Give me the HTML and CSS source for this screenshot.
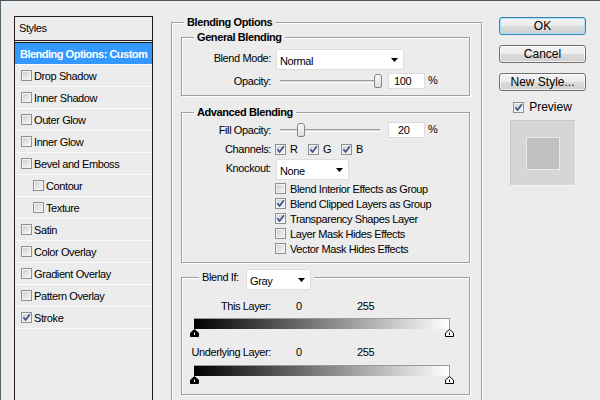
FILE: index.html
```html
<!DOCTYPE html>
<html>
<head>
<meta charset="utf-8">
<title>Layer Style</title>
<link rel="stylesheet" href="styles.css">
</head>
<body>
<div class="dialog">
  <aside class="styles">
    <div class="styles-head">Styles</div>
    <ul class="style-list">
      <li class="row selected">Blending Options: Custom</li>
      <li class="row"><span class="cb"></span>Drop Shadow</li>
      <li class="row"><span class="cb"></span>Inner Shadow</li>
      <li class="row"><span class="cb"></span>Outer Glow</li>
      <li class="row"><span class="cb"></span>Inner Glow</li>
      <li class="row"><span class="cb"></span>Bevel and Emboss</li>
      <li class="row sub"><span class="cb"></span>Contour</li>
      <li class="row sub"><span class="cb"></span>Texture</li>
      <li class="row"><span class="cb"></span>Satin</li>
      <li class="row"><span class="cb"></span>Color Overlay</li>
      <li class="row"><span class="cb"></span>Gradient Overlay</li>
      <li class="row"><span class="cb"></span>Pattern Overlay</li>
      <li class="row"><span class="cb"><svg viewBox="0 0 9 9"><path d="M1.3 4.3 L3.6 7 L7.9 1.2" fill="none" stroke="#3d4f90" stroke-width="1.7"/></svg></span>Stroke</li>
    </ul>
  </aside>

  <main class="main">
    <fieldset class="grp outer">
      <legend>Blending Options</legend>

      <fieldset class="grp inner general">
        <legend>General Blending</legend>
        <div class="frow h21">
          <span class="lbl up">Blend Mode:</span>
          <div class="select w-mode"><span>Normal</span><svg class="arr" width="7" height="4" viewBox="0 0 7 4"><path d="M0 0H7L3.5 4Z"/></svg></div>
        </div>
        <div class="frow h18 gap2">
          <span class="lbl">Opacity:</span>
          <div class="slider"><div class="track"></div><div class="thumb" style="left:94px"></div></div>
          <div class="num">100</div>
          <span class="pct">%</span>
        </div>
      </fieldset>

      <fieldset class="grp inner advanced">
        <legend>Advanced Blending</legend>
        <div class="frow h18">
          <span class="lbl">Fill Opacity:</span>
          <div class="slider"><div class="track"></div><div class="thumb" style="left:17px"></div></div>
          <div class="num num20">20</div>
          <span class="pct">%</span>
        </div>
        <div class="frow h14 gap3">
          <span class="lbl">Channels:</span>
          <div class="chans">
            <span class="chan"><span class="cb"><svg viewBox="0 0 9 9"><path d="M1.3 4.3 L3.6 7 L7.9 1.2" fill="none" stroke="#3d4f90" stroke-width="1.7"/></svg></span>R</span>
            <span class="chan"><span class="cb"><svg viewBox="0 0 9 9"><path d="M1.3 4.3 L3.6 7 L7.9 1.2" fill="none" stroke="#3d4f90" stroke-width="1.7"/></svg></span>G</span>
            <span class="chan"><span class="cb"><svg viewBox="0 0 9 9"><path d="M1.3 4.3 L3.6 7 L7.9 1.2" fill="none" stroke="#3d4f90" stroke-width="1.7"/></svg></span>B</span>
          </div>
        </div>
        <div class="frow h21 gap3">
          <span class="lbl up">Knockout:</span>
          <div class="select w-knock"><span>None</span><svg class="arr" width="7" height="4" viewBox="0 0 7 4"><path d="M0 0H7L3.5 4Z"/></svg></div>
        </div>
        <div class="checks">
          <div class="ck"><span class="cb"></span>Blend Interior Effects as Group</div>
          <div class="ck"><span class="cb"><svg viewBox="0 0 9 9"><path d="M1.3 4.3 L3.6 7 L7.9 1.2" fill="none" stroke="#3d4f90" stroke-width="1.7"/></svg></span>Blend Clipped Layers as Group</div>
          <div class="ck"><span class="cb"><svg viewBox="0 0 9 9"><path d="M1.3 4.3 L3.6 7 L7.9 1.2" fill="none" stroke="#3d4f90" stroke-width="1.7"/></svg></span>Transparency Shapes Layer</div>
          <div class="ck"><span class="cb"></span>Layer Mask Hides Effects</div>
          <div class="ck"><span class="cb"></span>Vector Mask Hides Effects</div>
        </div>
      </fieldset>

      <fieldset class="grp inner blendif">
        <legend>
          <span class="bi-label">Blend If:</span>
          <div class="select w-gray"><span>Gray</span><svg class="arr" width="7" height="4" viewBox="0 0 7 4"><path d="M0 0H7L3.5 4Z"/></svg></div>
        </legend>
        <div class="vals">
          <span class="lbl">This Layer:</span>
          <span class="v0">0</span>
          <span>255</span>
        </div>
        <div class="bar"></div>
        <div class="thumbs">
          <svg width="9" height="8" viewBox="0 0 9 8"><path d="M4.5 0.5 L8.5 4 V7.5 H0.5 V4 Z" fill="#000" stroke="#000"/><path d="M4.5 3.5V6" stroke="#fff"/></svg>
          <svg width="9" height="8" viewBox="0 0 9 8"><path d="M4.5 0.5 L8.5 4 V7.5 H0.5 V4 Z" fill="#fff" stroke="#000"/><path d="M4.5 3.5V6" stroke="#000"/></svg>
        </div>
        <div class="vals second">
          <span class="lbl">Underlying Layer:</span>
          <span class="v0">0</span>
          <span>255</span>
        </div>
        <div class="bar bar2"></div>
        <div class="thumbs">
          <svg width="9" height="8" viewBox="0 0 9 8"><path d="M4.5 0.5 L8.5 4 V7.5 H0.5 V4 Z" fill="#000" stroke="#000"/><path d="M4.5 3.5V6" stroke="#fff"/></svg>
          <svg width="9" height="8" viewBox="0 0 9 8"><path d="M4.5 0.5 L8.5 4 V7.5 H0.5 V4 Z" fill="#fff" stroke="#000"/><path d="M4.5 3.5V6" stroke="#000"/></svg>
        </div>
      </fieldset>
    </fieldset>
  </main>

  <div class="actions">
    <button class="btn default">OK</button>
    <button class="btn">Cancel</button>
    <button class="btn">New Style...</button>
    <div class="preview-row"><span class="cb"><svg viewBox="0 0 9 9"><path d="M1.3 4.3 L3.6 7 L7.9 1.2" fill="none" stroke="#3d4f90" stroke-width="1.7"/></svg></span>Preview</div>
    <div class="preview-box"><div class="preview-inner"></div></div>
  </div>
</div>
</body>
</html>
```
FILE: styles.css
```css
* { box-sizing: border-box; }
html, body { margin: 0; }
body {
  width: 600px;
  height: 400px;
  overflow: hidden;
  background: #ececec;
  font: 11px/12px "Liberation Sans", Arial, sans-serif;
  letter-spacing: -0.4px;
  color: #000;
  border-top: 1px solid #46565c;
  border-left: 1px solid #56676d;
}
.dialog {
  display: flex;
  align-items: flex-start;
  padding: 15px 0 0 13px;
}

/* ---------- Styles list ---------- */
.styles {
  flex: none;
  width: 139px;
  height: 400px;
  border: 1px solid #1c1c1c;
}
.styles-head {
  height: 24px;
  line-height: 23px;
  padding-left: 4px;
  border-bottom: 1px solid #1c1c1c;
}
.style-list {
  list-style: none;
  margin: 1px 0 0;
  padding: 0;
  border-top: 1px solid #1c1c1c;
}
.row {
  height: 22px;
  display: flex;
  align-items: center;
  gap: 2px;
  padding-left: 6px;
  border-bottom: 1px solid #fafafa;
}
.row.sub { padding-left: 18px; }
.row.selected {
  background: #3399ff;
  color: #fff;
  font-weight: bold;
  padding-left: 5px;
  letter-spacing: -0.5px;
}

/* ---------- checkbox ---------- */
.cb {
  flex: none;
  width: 11px;
  height: 11px;
  border: 1px solid #8f8f8f;
  background: linear-gradient(135deg, #cdcdcd, #f8f8f8);
  box-shadow: inset 0 0 0 1px #f3f3f3;
  display: inline-flex;
  align-items: center;
  justify-content: center;
}
.cb svg { width: 9px; height: 9px; display: block; }

/* ---------- group boxes ---------- */
.main {
  flex: none;
  width: 311px;
  margin-left: 18px;
}
fieldset.grp {
  margin: 0;
  min-width: 0;
  border: 1px solid #a0a0a0;
  box-shadow: inset 1px 1px 0 #fff, 1px 1px 0 #fff;
}
.grp > legend {
  font-weight: bold;
  line-height: 12px;
  padding: 0 3px;
  background: #ececec;
}
fieldset.outer {
  height: 395px;
  padding: 3px 11px 0 9px;
}
.outer > legend { margin-left: 3px; }
.inner > legend { margin-left: 12px; }
fieldset.general { padding: 6px 0 5px; }
fieldset.advanced { margin-top: 10px; padding: 3px 0 6px; }
fieldset.blendif { margin-top: 6px; padding: 15px 0 10px; }
.blendif > legend {
  margin-left: 17px;
  font-weight: normal;
  display: flex;
  align-items: flex-start;
  height: 16px;
}
.bi-label { width: 44px; margin-top: 2px; }

/* ---------- form rows ---------- */
.frow { display: flex; align-items: center; }
.h21 { height: 21px; }
.h18 { height: 18px; }
.h14 { height: 14px; }
.gap2 { margin-top: 2px; }
.gap3 { margin-top: 3px; }
.lbl { flex: none; width: 89px; text-align: right; }
.lbl.up { margin-bottom: 3px; }

.select {
  flex: none;
  height: 21px;
  margin-left: 5px;
  padding: 0 5px 0 3px;
  background: #fff;
  border: 1px solid #dedede;
  border-radius: 2px;
  display: flex;
  align-items: center;
  justify-content: space-between;
}
.select span { padding-top: 2px; }
.arr { display: block; }
.w-mode { width: 128px; }
.w-knock { width: 73px; }
.w-gray { width: 65px; margin-left: 0; margin-bottom: -5px; }

.slider {
  flex: none;
  position: relative;
  width: 102px;
  height: 18px;
  margin-left: 9px;
}
.track {
  margin-top: 8px;
  width: 100px;
  height: 3px;
  border-top: 1px solid #9c9c9c;
  border-bottom: 1px solid #fdfdfd;
  background: #dadada;
}
.thumb {
  position: absolute;
  top: 2px;
  width: 8px;
  height: 14px;
  border: 1px solid #858585;
  border-radius: 3px 3px 2px 2px;
  background: linear-gradient(#fbfbfb, #dcdcdc);
}
.num {
  flex: none;
  width: 37px;
  height: 16px;
  margin-left: 6px;
  padding-left: 5px;
  line-height: 15px;
  background: #fff;
  border: 1px solid #dcdcdc;
}
.num20 { padding-left: 9px; }
.pct { margin-left: 3px; margin-top: -2px; }

.chans { display: flex; margin-left: 4px; }
.chan { display: flex; align-items: center; gap: 4px; width: 33px; }

.checks { margin: 1px 0 0 93px; }
.ck { height: 15px; display: flex; align-items: center; gap: 4px; }

/* ---------- blend if ---------- */
.vals { display: flex; line-height: 12px; }
.vals.second { margin-top: 9px; }
.v0 { margin-left: 25px; width: 61px; }
.bar {
  margin: 6px 0 0 12px;
  width: 256px;
  height: 11px;
  background: linear-gradient(to right, #000, #fff);
  border-top: 1px solid #9a9a9a;
  border-right: 1px solid #9a9a9a;
}
.bar2 { margin-top: 7px; }
.thumbs {
  display: flex;
  justify-content: space-between;
  width: 264px;
  height: 8px;
  margin-left: 8px;
}
.thumbs svg { display: block; }

/* ---------- right column ---------- */
.actions {
  flex: none;
  width: 87px;
  margin-left: 17px;
  padding-top: 1px;
  display: flex;
  flex-direction: column;
  align-items: center;
  letter-spacing: 0;
}
.btn {
  width: 87px;
  height: 18px;
  margin: 0 0 10px;
  padding: 0;
  font: 12px/16px "Liberation Sans", Arial, sans-serif;
  color: #000;
  text-align: center;
  border: 1px solid #707070;
  border-radius: 3px;
  background: linear-gradient(#f3f3f3 0, #ebebeb 50%, #dddddd 50%, #cfcfcf 100%);
  box-shadow: inset 0 0 0 1px rgba(255, 255, 255, 0.7);
}
.btn.default {
  border-color: #3c7fb1;
  box-shadow: inset 0 0 0 1px #a6e3fb;
}
.preview-row {
  display: flex;
  align-items: center;
  gap: 5px;
  height: 12px;
  font-size: 12px;
  line-height: 12px;
}
.preview-box {
  margin-top: 7px;
  width: 66px;
  height: 66px;
  background: #d6d6d6;
  border: 1px solid;
  border-color: #c9c9c9 #f3f3f3 #f3f3f3 #c9c9c9;
  display: flex;
  align-items: center;
  justify-content: center;
}
.preview-inner {
  width: 34px;
  height: 33px;
  background: #c0c0c0;
  border: 1px solid #ebebeb;
}
```
